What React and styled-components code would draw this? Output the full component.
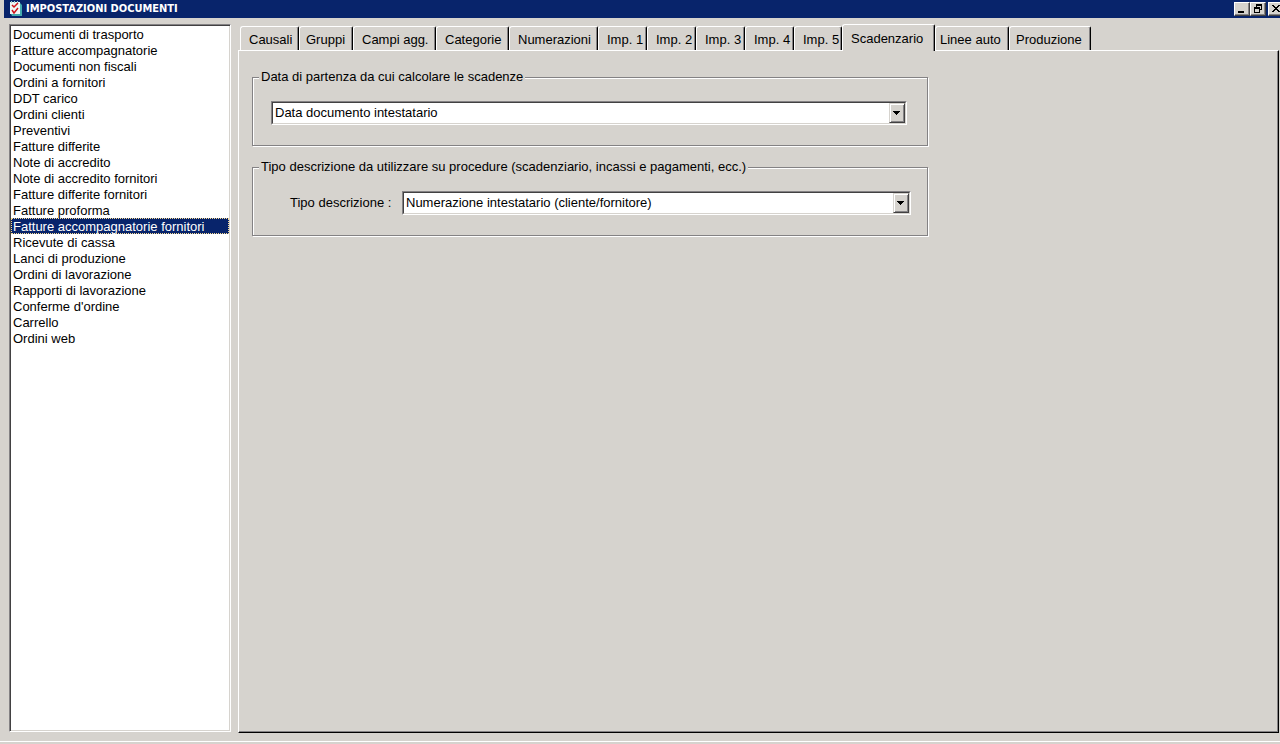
import { useState } from "react";
import styled, { createGlobalStyle, css } from "styled-components";

const GlobalStyle = createGlobalStyle`
  * {
    box-sizing: border-box;
  }

  body {
    margin: 0;
    background: #d6d3ce;
    color: #000;
    font-family: "Liberation Sans", Arial, sans-serif;
    font-size: 13px;
    line-height: 16px;
  }

  button,
  select {
    font: inherit;
    color: inherit;
  }
`;

const Window = styled.div`
  display: flex;
  flex-direction: column;
  height: 100vh;
  overflow: hidden;
`;

const TitleBar = styled.header`
  display: flex;
  align-items: flex-start;
  flex: none;
  height: 18px;
  padding: 1px 0 0 4px;
  border-left: 4px solid #d6d3ce;
  background: #08246b;
  color: #fff;
  overflow: hidden;
`;

const Title = styled.h1`
  flex: 1;
  margin: 0 0 0 3px;
  font-family: "DejaVu Sans Condensed", "DejaVu Sans", sans-serif;
  font-stretch: condensed;
  font-size: 11px;
  font-weight: 700;
  line-height: 16px;
`;

const WindowButtons = styled.div`
  display: flex;
  margin: 1px -4px 0 0;
`;

const WindowButton = styled.button`
  display: flex;
  flex: none;
  width: 16px;
  height: 14px;
  margin-left: ${(props) => (props.$apart ? "2px" : "0")};
  padding: 0;
  border: 1px solid;
  border-color: #fff #424142 #424142 #fff;
  background: #d6d3ce;
  box-shadow: inset -1px -1px 0 #848284;
`;

const Body = styled.main`
  display: flex;
  flex: 1;
  gap: 7px;
  min-height: 0;
  padding: 6px 1px 8px 9px;
`;

const DocumentList = styled.ul`
  flex: none;
  width: 222px;
  margin: 0 0 1px;
  padding: 1px;
  list-style: none;
  border: 1px solid;
  border-color: #848284 #fff #fff #848284;
  background: #fff;
  box-shadow: inset 1px 1px 0 #424142, inset -1px -1px 0 #d6d3ce;
  overflow: hidden;
`;

const DocumentButton = styled.button`
  display: block;
  width: 100%;
  height: 16px;
  padding: 0 1px;
  border: 1px solid transparent;
  background: transparent;
  line-height: 16px;
  text-align: left;
  white-space: nowrap;

  ${(props) =>
    props.$selected &&
    css`
      border: 1px dotted #f7db94;
      background: #08246b;
      color: #fff;
    `}
`;

const Tabs = styled.section`
  display: flex;
  flex: 1;
  flex-direction: column;
  min-width: 0;
`;

const TabBar = styled.div`
  display: flex;
  align-items: flex-end;
  flex: none;
  height: 26px;
  padding-left: 2px;
`;

const Tab = styled.button`
  flex: none;
  width: ${(props) => props.$width}px;
  height: 24px;
  padding: 2px 0 0 ${(props) => props.$indent}px;
  border: 1px solid;
  border-color: #fff #000 transparent #fff;
  border-bottom: 0;
  border-radius: 3px 2px 0 0;
  background: #d6d3ce;
  box-shadow: inset -1px 0 0 #848284;
  text-align: left;
  white-space: nowrap;

  ${(props) =>
    props.$active &&
    css`
      position: relative;
      z-index: 1;
      height: 27px;
      margin-bottom: -1px;
      padding-bottom: 1px;
    `}
`;

const Panel = styled.div`
  flex: 1;
  padding: 18px 13px;
  border: 1px solid;
  border-color: #fff #000 #000 #fff;
  box-shadow: inset -1px -1px 0 #848284;
`;

const Group = styled.fieldset`
  min-width: 0;
  max-width: 676px;
  height: 77px;
  margin: 0 0 13px;
  padding: 0 16px 0 6px;
  border: 1px solid #848284;
  box-shadow: 1px 1px 0 #fff, inset 1px 1px 0 #fff;

  legend {
    padding: 0 2px;
    background: #d6d3ce;
  }
`;

const Field = styled.div`
  display: flex;
  align-items: center;
  gap: 6px;
  padding: ${(props) => (props.$labelled ? "16px 0 0 31px" : "16px 4px 0 12px")};
`;

const Label = styled.label`
  min-width: 106px;
`;

const Combo = styled.div`
  display: grid;
  flex: 1;
  align-items: center;
  height: 24px;
  border: 1px solid;
  border-color: #848284 #fff #fff #848284;

  > * {
    grid-area: 1 / 1;
  }

  select {
    width: 100%;
    height: 22px;
    padding: 0 18px 0 2px;
    appearance: none;
    border: 1px solid;
    border-color: #424142 #d6d3ce #d6d3ce #424142;
    border-radius: 0;
    background: #fff;
  }
`;

const DropArrow = styled.span`
  display: flex;
  align-items: center;
  justify-content: center;
  justify-self: end;
  width: 16px;
  height: 20px;
  margin-right: 1px;
  padding-right: 1px;
  border: 1px solid;
  border-color: #d6d3ce #424142 #424142 #d6d3ce;
  background: #d6d3ce;
  box-shadow: inset 1px 1px 0 #fff, inset -1px -1px 0 #848284;
  pointer-events: none;
`;

const StatusEdge = styled.footer`
  flex: none;
  height: 3px;
  border-top: 1px solid #fff;
`;

const documents = [
  "Documenti di trasporto",
  "Fatture accompagnatorie",
  "Documenti non fiscali",
  "Ordini a fornitori",
  "DDT carico",
  "Ordini clienti",
  "Preventivi",
  "Fatture differite",
  "Note di accredito",
  "Note di accredito fornitori",
  "Fatture differite fornitori",
  "Fatture proforma",
  "Fatture accompagnatorie fornitori",
  "Ricevute di cassa",
  "Lanci di produzione",
  "Ordini di lavorazione",
  "Rapporti di lavorazione",
  "Conferme d'ordine",
  "Carrello",
  "Ordini web",
];

const tabs = [
  { title: "Causali", width: 59, indent: 8 },
  { title: "Gruppi", width: 54, indent: 6 },
  { title: "Campi agg.", width: 83, indent: 8 },
  { title: "Categorie", width: 73, indent: 8 },
  { title: "Numerazioni", width: 89, indent: 8 },
  { title: "Imp. 1", width: 49, indent: 8 },
  { title: "Imp. 2", width: 49, indent: 8 },
  { title: "Imp. 3", width: 49, indent: 8 },
  { title: "Imp. 4", width: 49, indent: 8 },
  { title: "Imp. 5", width: 48, indent: 8 },
  { title: "Scadenzario", width: 93, indent: 8 },
  { title: "Linee auto", width: 74, indent: 4 },
  { title: "Produzione", width: 82, indent: 6 },
];

const ChecklistIcon = () => (
  <svg width="15" height="16" viewBox="0 0 15 16" aria-hidden="true">
    <path d="M3 2h9l2 2v11H4L3 13z" fill="#42aaad" />
    <path d="M2 1h10v12H2z" fill="#eff7f7" />
    <path d="M3 0h1v2H3zM6 0h1v2H6zM9 0h1v2H9z" fill="#9ccfce" />
    <path
      d="M4 4l2 2 4-4M4 9l2 3 4-5"
      fill="none"
      stroke="#ce1018"
      strokeWidth="1.5"
    />
  </svg>
);

const Arrow = () => (
  <svg width="7" height="4" viewBox="0 0 7 4" shapeRendering="crispEdges">
    <path d="M0 0h7v1H0zM1 1h5v1H1zM2 2h3v1H2zM3 3h1v1H3z" />
  </svg>
);

const buttonShapes = {
  "Riduci a icona": "M3 8h6v2H3z",
  Ripristina:
    "M5 1h6v2H5zM5 3h1v1H5zM10 3h1v4h-1zM9 6h1v1H9zM3 4h6v2H3zM3 6h1v4H3zM8 6h1v4H8zM3 9h6v1H3z",
  Chiudi:
    "M3 2h2v1H3zM9 2h2v1H9zM4 3h2v1H4zM8 3h2v1H8zM5 4h4v1H5zM6 5h2v1H6zM5 6h4v1H5zM4 7h2v1H4zM8 7h2v1H8zM3 8h2v1H3zM9 8h2v1H9z",
};

export default function App() {
  const [selected, setSelected] = useState(12);
  const [active, setActive] = useState("Scadenzario");

  return (
    <Window>
      <GlobalStyle />
      <TitleBar>
        <ChecklistIcon />
        <Title>IMPOSTAZIONI DOCUMENTI</Title>
        <WindowButtons>
          {Object.keys(buttonShapes).map((name) => (
            <WindowButton
              key={name}
              aria-label={name}
              $apart={name === "Chiudi"}
            >
              <svg
                width="14"
                height="12"
                viewBox="0 0 14 12"
                shapeRendering="crispEdges"
              >
                <path d={buttonShapes[name]} />
              </svg>
            </WindowButton>
          ))}
        </WindowButtons>
      </TitleBar>

      <Body>
        <DocumentList>
          {documents.map((name, i) => (
            <li key={name}>
              <DocumentButton
                $selected={i === selected}
                onClick={() => setSelected(i)}
              >
                {name}
              </DocumentButton>
            </li>
          ))}
        </DocumentList>

        <Tabs>
          <TabBar role="tablist">
            {tabs.map((tab) => (
              <Tab
                key={tab.title}
                role="tab"
                aria-selected={tab.title === active}
                $active={tab.title === active}
                $width={tab.width}
                $indent={tab.indent}
                onClick={() => setActive(tab.title)}
              >
                {tab.title}
              </Tab>
            ))}
          </TabBar>

          <Panel role="tabpanel">
            <Group>
              <legend>Data di partenza da cui calcolare le scadenze</legend>
              <Field>
                <Combo>
                  <select aria-label="Data di partenza">
                    <option>Data documento intestatario</option>
                  </select>
                  <DropArrow>
                    <Arrow />
                  </DropArrow>
                </Combo>
              </Field>
            </Group>

            <Group>
              <legend>
                Tipo descrizione da utilizzare su procedure (scadenziario,
                incassi e pagamenti, ecc.)
              </legend>
              <Field $labelled>
                <Label htmlFor="tipo">Tipo descrizione :</Label>
                <Combo>
                  <select id="tipo">
                    <option>Numerazione intestatario (cliente/fornitore)</option>
                  </select>
                  <DropArrow>
                    <Arrow />
                  </DropArrow>
                </Combo>
              </Field>
            </Group>
          </Panel>
        </Tabs>
      </Body>
      <StatusEdge />
    </Window>
  );
}
